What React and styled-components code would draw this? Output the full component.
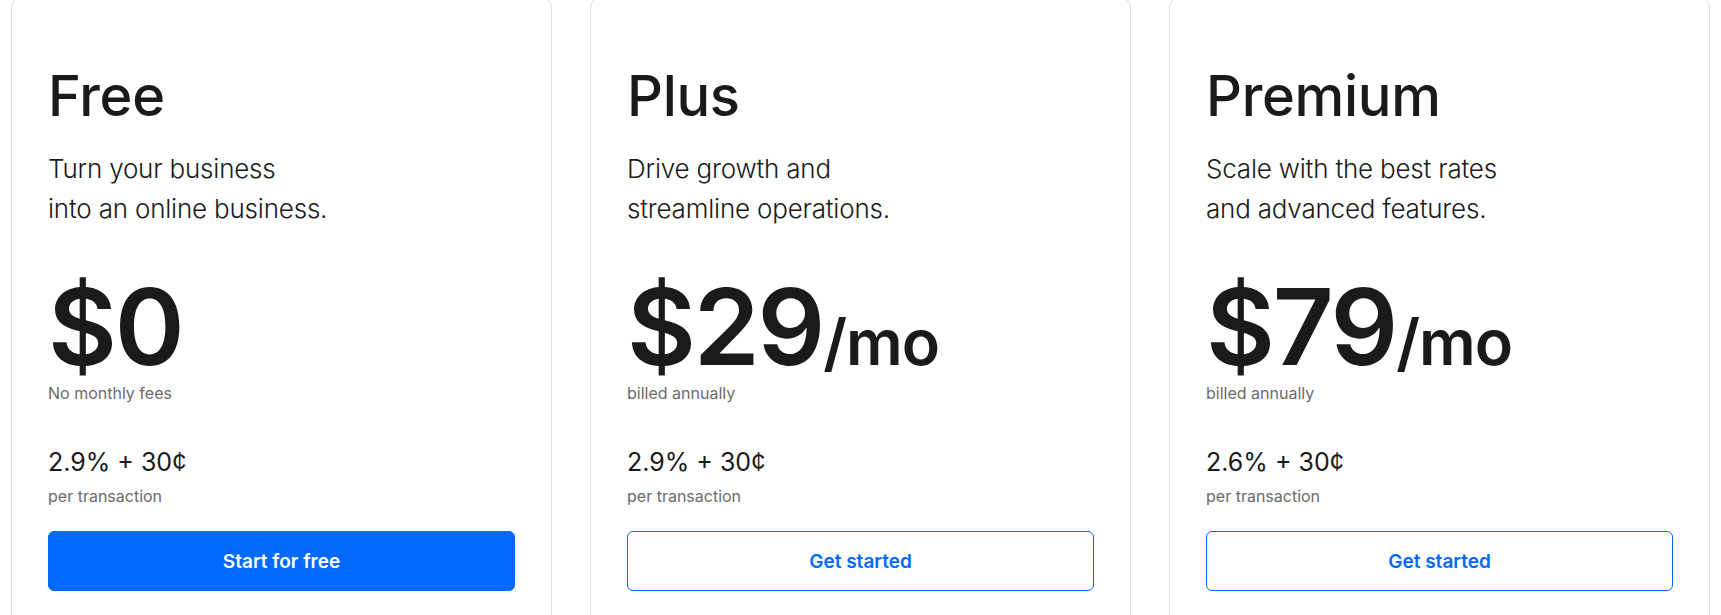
import styled, { createGlobalStyle } from "styled-components";

const plans = [
  {
    name: "Free",
    lines: ["Turn your business", "into an online business."],
    price: "$0",
    period: null,
    note: "No monthly fees",
    fee: "2.9% + 30¢",
    cta: "Start for free",
    primary: true,
  },
  {
    name: "Plus",
    lines: ["Drive growth and", "streamline operations."],
    price: "$29",
    period: "/mo",
    note: "billed annually",
    fee: "2.9% + 30¢",
    cta: "Get started",
    primary: false,
  },
  {
    name: "Premium",
    lines: ["Scale with the best rates", "and advanced features."],
    price: "$79",
    period: "/mo",
    note: "billed annually",
    fee: "2.6% + 30¢",
    cta: "Get started",
    primary: false,
  },
];

export default function App() {
  return (
    <>
      <GlobalStyle />
      <Grid>
        {plans.map((plan) => (
          <Card key={plan.name}>
            <Name>{plan.name}</Name>
            <Tagline>
              {plan.lines[0]}
              <br />
              {plan.lines[1]}
            </Tagline>
            <Price>
              {plan.price}
              {plan.period && <Period>{plan.period}</Period>}
            </Price>
            <Note>{plan.note}</Note>
            <Fee>{plan.fee}</Fee>
            <FeeNote>per transaction</FeeNote>
            <CtaButton $primary={plan.primary}>{plan.cta}</CtaButton>
          </Card>
        ))}
      </Grid>
    </>
  );
}

const GlobalStyle = createGlobalStyle`
  body {
    margin: 0;
    background: #ffffff;
    font-family: Inter, "Noto Sans", sans-serif;
    color: #1a1a1a;
    overflow: hidden;
  }
`;

const Grid = styled.div`
  display: grid;
  grid-template-columns: repeat(3, 1fr);
  gap: 38px;
  padding: 0 11px;
  margin-top: -4px;
`;

const Card = styled.div`
  display: flex;
  flex-direction: column;
  align-items: flex-start;
  height: 700px;
  padding: 67px 36px 0;
  border: 1px solid #dcdcdc;
  border-radius: 12px;
  background: #fff;
`;

const Name = styled.h2`
  margin: 0;
  font-size: 56px;
  line-height: 64px;
  font-weight: 500;
  letter-spacing: -0.3px;
  color: #1a1a1a;
`;

const Tagline = styled.p`
  margin: 21px 0 0;
  font-size: 26px;
  line-height: 40px;
  font-weight: 300;
  letter-spacing: -0.2px;
  color: #1a1a1a;
`;

const Price = styled.div`
  margin-top: 45px;
  font-size: 106px;
  line-height: 106px;
  font-weight: 600;
  letter-spacing: -2.2px;
  color: #1a1a1a;
`;

const Period = styled.span`
  font-size: 63px;
  line-height: 1;
  letter-spacing: -1px;
`;

const Note = styled.p`
  margin: 3px 0 0;
  font-size: 16px;
  line-height: 20px;
  color: #6b6b6b;
`;

const Fee = styled.p`
  margin: 43px 0 0;
  font-size: 25px;
  line-height: 32px;
  font-weight: 400;
  color: #1a1a1a;
`;

const FeeNote = styled.p`
  margin: 8px 0 0;
  font-size: 16px;
  line-height: 20px;
  color: #6b6b6b;
`;

const CtaButton = styled.button`
  margin-top: 25px;
  width: 100%;
  height: 60px;
  border-radius: 6px;
  border: 1px solid #006aff;
  background: ${(p) => (p.$primary ? "#006aff" : "#ffffff")};
  color: ${(p) => (p.$primary ? "#ffffff" : "#006aff")};
  font-family: Inter, "Noto Sans", sans-serif;
  font-size: 19px;
  font-weight: 600;
  cursor: pointer;
`;
